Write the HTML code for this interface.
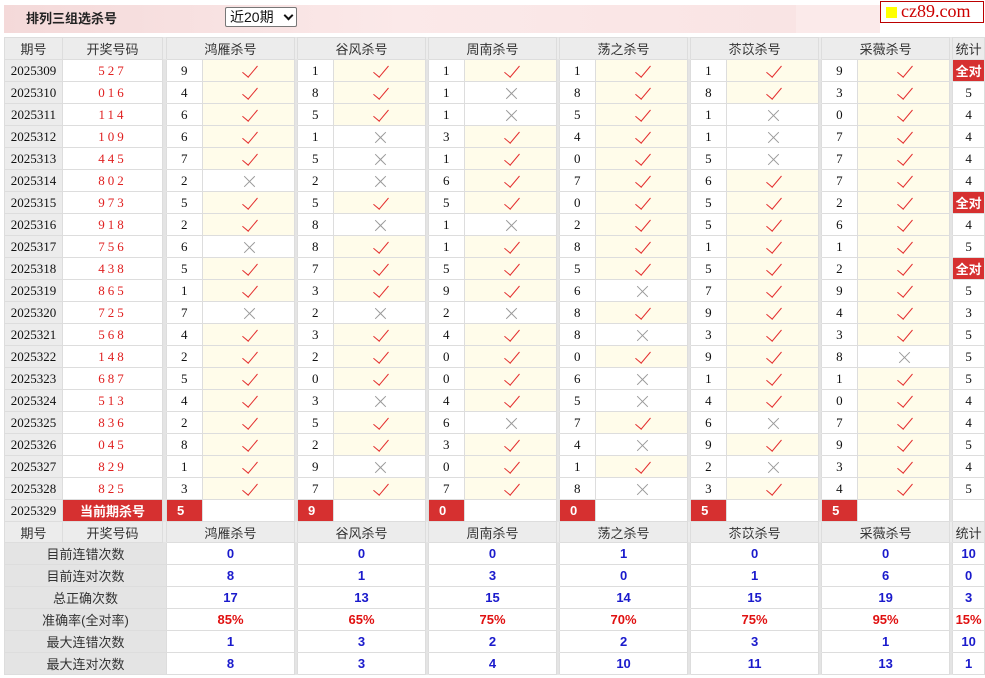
<!DOCTYPE html>
<html><head><meta charset="utf-8"><style>
body{margin:0;background:#fff;width:985px;height:678px;overflow:hidden;font-family:"Liberation Sans","Noto Sans CJK SC",sans-serif;}
.ban{position:absolute;left:4px;top:5px;width:792px;height:28px;background:linear-gradient(90deg,#f4d9d9 0%,#fbe9e9 50%,#f9e4e4 100%);}
.ban b{position:absolute;left:22px;top:3px;font-size:13px;color:#222;}
.sel{position:absolute;left:225px;top:7px;width:66px;height:18px;border:1px solid #777;border-radius:2px;background:#fff;font-size:14px;line-height:18px;padding-left:4px;box-sizing:content-box;color:#111;}
.sel span{position:absolute;right:4px;top:4px;width:5px;height:5px;border-right:2px solid #111;border-bottom:2px solid #111;transform:rotate(45deg);}
.logo{position:absolute;left:880px;top:1px;width:102px;height:20px;border:1px solid #b00;background:#fff;}
.logo i{position:absolute;left:5px;top:5px;width:11px;height:11px;background:#ff0;}
.logo span{position:absolute;left:20px;top:-1px;font:18px "Liberation Serif",serif;color:#c00;}
.pk{position:absolute;left:796px;top:5px;width:84px;height:28px;background:#fbeaea;}
table{position:absolute;left:4px;top:37px;border-collapse:collapse;table-layout:fixed;width:980px;}
td{border:1px solid #ddd;height:21px;padding:0;font-size:13px;text-align:center;font-family:"Liberation Serif","Noto Sans CJK SC",serif;color:#111;white-space:nowrap;overflow:hidden;}
tr.h td{background:#ececec;font-family:"Liberation Sans","Noto Sans CJK SC",sans-serif;color:#333;}
tr.h2 td{height:20px;}
td.q{background:#ececec;}
td.o{color:#e02020;letter-spacing:3px;}
td.s{background:#e4e4e4;border-top-color:#e4e4e4;border-bottom-color:#e4e4e4;}
td.n{text-align:left;padding-left:14px;}
td.y,td.x{position:relative;}
td.y{background:#fffcea;}
td.y:after{content:"";position:absolute;left:50%;top:2px;width:7px;height:14px;margin-left:-3px;border-right:1.7px solid #e43030;border-bottom:1.7px solid #e43030;transform:rotate(40deg);}
td.x:before,td.x:after{content:"";position:absolute;left:50%;top:50%;width:15px;height:1px;margin-left:-7px;background:#999;transform:rotate(45deg);}
td.x:after{transform:rotate(-45deg);}
td.a{background:#d63030;color:#fff;font-weight:bold;font-family:"Liberation Sans","Noto Sans CJK SC",sans-serif;}
td.r{background:#d63030;color:#fff;font-weight:bold;text-align:left;padding-left:10px;font-family:"Liberation Sans",sans-serif;}
tr.t td{font:bold 13px "Liberation Sans",sans-serif;color:#1a1acc;}
tr.t td.l{background:#e4e4e4;font-weight:normal;color:#333;font-family:"Liberation Sans","Noto Sans CJK SC",sans-serif;}
tr.t td.p{color:#e01010;}
</style></head><body>
<div class="ban"><b>排列三组选杀号</b></div>
<div class="pk"></div>
<div class="sel">近20期<span></span></div>
<div class="logo"><i></i><span>cz89.com</span></div>
<table>
<colgroup><col style="width:58px"><col style="width:100px"><col style="width:4px">
<col style="width:36px"><col style="width:92px"><col style="width:3px">
<col style="width:36px"><col style="width:92px"><col style="width:3px">
<col style="width:36px"><col style="width:92px"><col style="width:3px">
<col style="width:36px"><col style="width:92px"><col style="width:3px">
<col style="width:36px"><col style="width:92px"><col style="width:3px">
<col style="width:36px"><col style="width:92px"><col style="width:3px">
<col style="width:32px"></colgroup>
<tr class="h"><td>期号</td><td>开奖号码</td><td class="s"></td><td colspan="2">鸿雁杀号</td><td class="s"></td><td colspan="2">谷风杀号</td><td class="s"></td><td colspan="2">周南杀号</td><td class="s"></td><td colspan="2">荡之杀号</td><td class="s"></td><td colspan="2">苶苡杀号</td><td class="s"></td><td colspan="2">采薇杀号</td><td class="s"></td><td>统计</td></tr>
<tr><td class="q">2025309</td><td class="o">527</td><td class="s"></td><td class="n">9</td><td class="y"></td><td class="s"></td><td class="n">1</td><td class="y"></td><td class="s"></td><td class="n">1</td><td class="y"></td><td class="s"></td><td class="n">1</td><td class="y"></td><td class="s"></td><td class="n">1</td><td class="y"></td><td class="s"></td><td class="n">9</td><td class="y"></td><td class="s"></td><td class="a">全对</td></tr>
<tr><td class="q">2025310</td><td class="o">016</td><td class="s"></td><td class="n">4</td><td class="y"></td><td class="s"></td><td class="n">8</td><td class="y"></td><td class="s"></td><td class="n">1</td><td class="x"></td><td class="s"></td><td class="n">8</td><td class="y"></td><td class="s"></td><td class="n">8</td><td class="y"></td><td class="s"></td><td class="n">3</td><td class="y"></td><td class="s"></td><td>5</td></tr>
<tr><td class="q">2025311</td><td class="o">114</td><td class="s"></td><td class="n">6</td><td class="y"></td><td class="s"></td><td class="n">5</td><td class="y"></td><td class="s"></td><td class="n">1</td><td class="x"></td><td class="s"></td><td class="n">5</td><td class="y"></td><td class="s"></td><td class="n">1</td><td class="x"></td><td class="s"></td><td class="n">0</td><td class="y"></td><td class="s"></td><td>4</td></tr>
<tr><td class="q">2025312</td><td class="o">109</td><td class="s"></td><td class="n">6</td><td class="y"></td><td class="s"></td><td class="n">1</td><td class="x"></td><td class="s"></td><td class="n">3</td><td class="y"></td><td class="s"></td><td class="n">4</td><td class="y"></td><td class="s"></td><td class="n">1</td><td class="x"></td><td class="s"></td><td class="n">7</td><td class="y"></td><td class="s"></td><td>4</td></tr>
<tr><td class="q">2025313</td><td class="o">445</td><td class="s"></td><td class="n">7</td><td class="y"></td><td class="s"></td><td class="n">5</td><td class="x"></td><td class="s"></td><td class="n">1</td><td class="y"></td><td class="s"></td><td class="n">0</td><td class="y"></td><td class="s"></td><td class="n">5</td><td class="x"></td><td class="s"></td><td class="n">7</td><td class="y"></td><td class="s"></td><td>4</td></tr>
<tr><td class="q">2025314</td><td class="o">802</td><td class="s"></td><td class="n">2</td><td class="x"></td><td class="s"></td><td class="n">2</td><td class="x"></td><td class="s"></td><td class="n">6</td><td class="y"></td><td class="s"></td><td class="n">7</td><td class="y"></td><td class="s"></td><td class="n">6</td><td class="y"></td><td class="s"></td><td class="n">7</td><td class="y"></td><td class="s"></td><td>4</td></tr>
<tr><td class="q">2025315</td><td class="o">973</td><td class="s"></td><td class="n">5</td><td class="y"></td><td class="s"></td><td class="n">5</td><td class="y"></td><td class="s"></td><td class="n">5</td><td class="y"></td><td class="s"></td><td class="n">0</td><td class="y"></td><td class="s"></td><td class="n">5</td><td class="y"></td><td class="s"></td><td class="n">2</td><td class="y"></td><td class="s"></td><td class="a">全对</td></tr>
<tr><td class="q">2025316</td><td class="o">918</td><td class="s"></td><td class="n">2</td><td class="y"></td><td class="s"></td><td class="n">8</td><td class="x"></td><td class="s"></td><td class="n">1</td><td class="x"></td><td class="s"></td><td class="n">2</td><td class="y"></td><td class="s"></td><td class="n">5</td><td class="y"></td><td class="s"></td><td class="n">6</td><td class="y"></td><td class="s"></td><td>4</td></tr>
<tr><td class="q">2025317</td><td class="o">756</td><td class="s"></td><td class="n">6</td><td class="x"></td><td class="s"></td><td class="n">8</td><td class="y"></td><td class="s"></td><td class="n">1</td><td class="y"></td><td class="s"></td><td class="n">8</td><td class="y"></td><td class="s"></td><td class="n">1</td><td class="y"></td><td class="s"></td><td class="n">1</td><td class="y"></td><td class="s"></td><td>5</td></tr>
<tr><td class="q">2025318</td><td class="o">438</td><td class="s"></td><td class="n">5</td><td class="y"></td><td class="s"></td><td class="n">7</td><td class="y"></td><td class="s"></td><td class="n">5</td><td class="y"></td><td class="s"></td><td class="n">5</td><td class="y"></td><td class="s"></td><td class="n">5</td><td class="y"></td><td class="s"></td><td class="n">2</td><td class="y"></td><td class="s"></td><td class="a">全对</td></tr>
<tr><td class="q">2025319</td><td class="o">865</td><td class="s"></td><td class="n">1</td><td class="y"></td><td class="s"></td><td class="n">3</td><td class="y"></td><td class="s"></td><td class="n">9</td><td class="y"></td><td class="s"></td><td class="n">6</td><td class="x"></td><td class="s"></td><td class="n">7</td><td class="y"></td><td class="s"></td><td class="n">9</td><td class="y"></td><td class="s"></td><td>5</td></tr>
<tr><td class="q">2025320</td><td class="o">725</td><td class="s"></td><td class="n">7</td><td class="x"></td><td class="s"></td><td class="n">2</td><td class="x"></td><td class="s"></td><td class="n">2</td><td class="x"></td><td class="s"></td><td class="n">8</td><td class="y"></td><td class="s"></td><td class="n">9</td><td class="y"></td><td class="s"></td><td class="n">4</td><td class="y"></td><td class="s"></td><td>3</td></tr>
<tr><td class="q">2025321</td><td class="o">568</td><td class="s"></td><td class="n">4</td><td class="y"></td><td class="s"></td><td class="n">3</td><td class="y"></td><td class="s"></td><td class="n">4</td><td class="y"></td><td class="s"></td><td class="n">8</td><td class="x"></td><td class="s"></td><td class="n">3</td><td class="y"></td><td class="s"></td><td class="n">3</td><td class="y"></td><td class="s"></td><td>5</td></tr>
<tr><td class="q">2025322</td><td class="o">148</td><td class="s"></td><td class="n">2</td><td class="y"></td><td class="s"></td><td class="n">2</td><td class="y"></td><td class="s"></td><td class="n">0</td><td class="y"></td><td class="s"></td><td class="n">0</td><td class="y"></td><td class="s"></td><td class="n">9</td><td class="y"></td><td class="s"></td><td class="n">8</td><td class="x"></td><td class="s"></td><td>5</td></tr>
<tr><td class="q">2025323</td><td class="o">687</td><td class="s"></td><td class="n">5</td><td class="y"></td><td class="s"></td><td class="n">0</td><td class="y"></td><td class="s"></td><td class="n">0</td><td class="y"></td><td class="s"></td><td class="n">6</td><td class="x"></td><td class="s"></td><td class="n">1</td><td class="y"></td><td class="s"></td><td class="n">1</td><td class="y"></td><td class="s"></td><td>5</td></tr>
<tr><td class="q">2025324</td><td class="o">513</td><td class="s"></td><td class="n">4</td><td class="y"></td><td class="s"></td><td class="n">3</td><td class="x"></td><td class="s"></td><td class="n">4</td><td class="y"></td><td class="s"></td><td class="n">5</td><td class="x"></td><td class="s"></td><td class="n">4</td><td class="y"></td><td class="s"></td><td class="n">0</td><td class="y"></td><td class="s"></td><td>4</td></tr>
<tr><td class="q">2025325</td><td class="o">836</td><td class="s"></td><td class="n">2</td><td class="y"></td><td class="s"></td><td class="n">5</td><td class="y"></td><td class="s"></td><td class="n">6</td><td class="x"></td><td class="s"></td><td class="n">7</td><td class="y"></td><td class="s"></td><td class="n">6</td><td class="x"></td><td class="s"></td><td class="n">7</td><td class="y"></td><td class="s"></td><td>4</td></tr>
<tr><td class="q">2025326</td><td class="o">045</td><td class="s"></td><td class="n">8</td><td class="y"></td><td class="s"></td><td class="n">2</td><td class="y"></td><td class="s"></td><td class="n">3</td><td class="y"></td><td class="s"></td><td class="n">4</td><td class="x"></td><td class="s"></td><td class="n">9</td><td class="y"></td><td class="s"></td><td class="n">9</td><td class="y"></td><td class="s"></td><td>5</td></tr>
<tr><td class="q">2025327</td><td class="o">829</td><td class="s"></td><td class="n">1</td><td class="y"></td><td class="s"></td><td class="n">9</td><td class="x"></td><td class="s"></td><td class="n">0</td><td class="y"></td><td class="s"></td><td class="n">1</td><td class="y"></td><td class="s"></td><td class="n">2</td><td class="x"></td><td class="s"></td><td class="n">3</td><td class="y"></td><td class="s"></td><td>4</td></tr>
<tr><td class="q">2025328</td><td class="o">825</td><td class="s"></td><td class="n">3</td><td class="y"></td><td class="s"></td><td class="n">7</td><td class="y"></td><td class="s"></td><td class="n">7</td><td class="y"></td><td class="s"></td><td class="n">8</td><td class="x"></td><td class="s"></td><td class="n">3</td><td class="y"></td><td class="s"></td><td class="n">4</td><td class="y"></td><td class="s"></td><td>5</td></tr>
<tr><td class="q">2025329</td><td class="a">当前期杀号</td><td class="s"></td><td class="r">5</td><td></td><td class="s"></td><td class="r">9</td><td></td><td class="s"></td><td class="r">0</td><td></td><td class="s"></td><td class="r">0</td><td></td><td class="s"></td><td class="r">5</td><td></td><td class="s"></td><td class="r">5</td><td></td><td class="s"></td><td></td></tr>
<tr class="h h2"><td>期号</td><td>开奖号码</td><td class="s"></td><td colspan="2">鸿雁杀号</td><td class="s"></td><td colspan="2">谷风杀号</td><td class="s"></td><td colspan="2">周南杀号</td><td class="s"></td><td colspan="2">荡之杀号</td><td class="s"></td><td colspan="2">苶苡杀号</td><td class="s"></td><td colspan="2">采薇杀号</td><td class="s"></td><td>统计</td></tr>
<tr class="t"><td class="l" colspan="3">目前连错次数</td><td colspan="2">0</td><td class="s"></td><td colspan="2">0</td><td class="s"></td><td colspan="2">0</td><td class="s"></td><td colspan="2">1</td><td class="s"></td><td colspan="2">0</td><td class="s"></td><td colspan="2">0</td><td class="s"></td><td>10</td></tr>
<tr class="t"><td class="l" colspan="3">目前连对次数</td><td colspan="2">8</td><td class="s"></td><td colspan="2">1</td><td class="s"></td><td colspan="2">3</td><td class="s"></td><td colspan="2">0</td><td class="s"></td><td colspan="2">1</td><td class="s"></td><td colspan="2">6</td><td class="s"></td><td>0</td></tr>
<tr class="t"><td class="l" colspan="3">总正确次数</td><td colspan="2">17</td><td class="s"></td><td colspan="2">13</td><td class="s"></td><td colspan="2">15</td><td class="s"></td><td colspan="2">14</td><td class="s"></td><td colspan="2">15</td><td class="s"></td><td colspan="2">19</td><td class="s"></td><td>3</td></tr>
<tr class="t"><td class="l" colspan="3">准确率(全对率)</td><td class="p" colspan="2">85%</td><td class="s"></td><td class="p" colspan="2">65%</td><td class="s"></td><td class="p" colspan="2">75%</td><td class="s"></td><td class="p" colspan="2">70%</td><td class="s"></td><td class="p" colspan="2">75%</td><td class="s"></td><td class="p" colspan="2">95%</td><td class="s"></td><td class="p">15%</td></tr>
<tr class="t"><td class="l" colspan="3">最大连错次数</td><td colspan="2">1</td><td class="s"></td><td colspan="2">3</td><td class="s"></td><td colspan="2">2</td><td class="s"></td><td colspan="2">2</td><td class="s"></td><td colspan="2">3</td><td class="s"></td><td colspan="2">1</td><td class="s"></td><td>10</td></tr>
<tr class="t"><td class="l" colspan="3">最大连对次数</td><td colspan="2">8</td><td class="s"></td><td colspan="2">3</td><td class="s"></td><td colspan="2">4</td><td class="s"></td><td colspan="2">10</td><td class="s"></td><td colspan="2">11</td><td class="s"></td><td colspan="2">13</td><td class="s"></td><td>1</td></tr>
</table>
</body></html>
